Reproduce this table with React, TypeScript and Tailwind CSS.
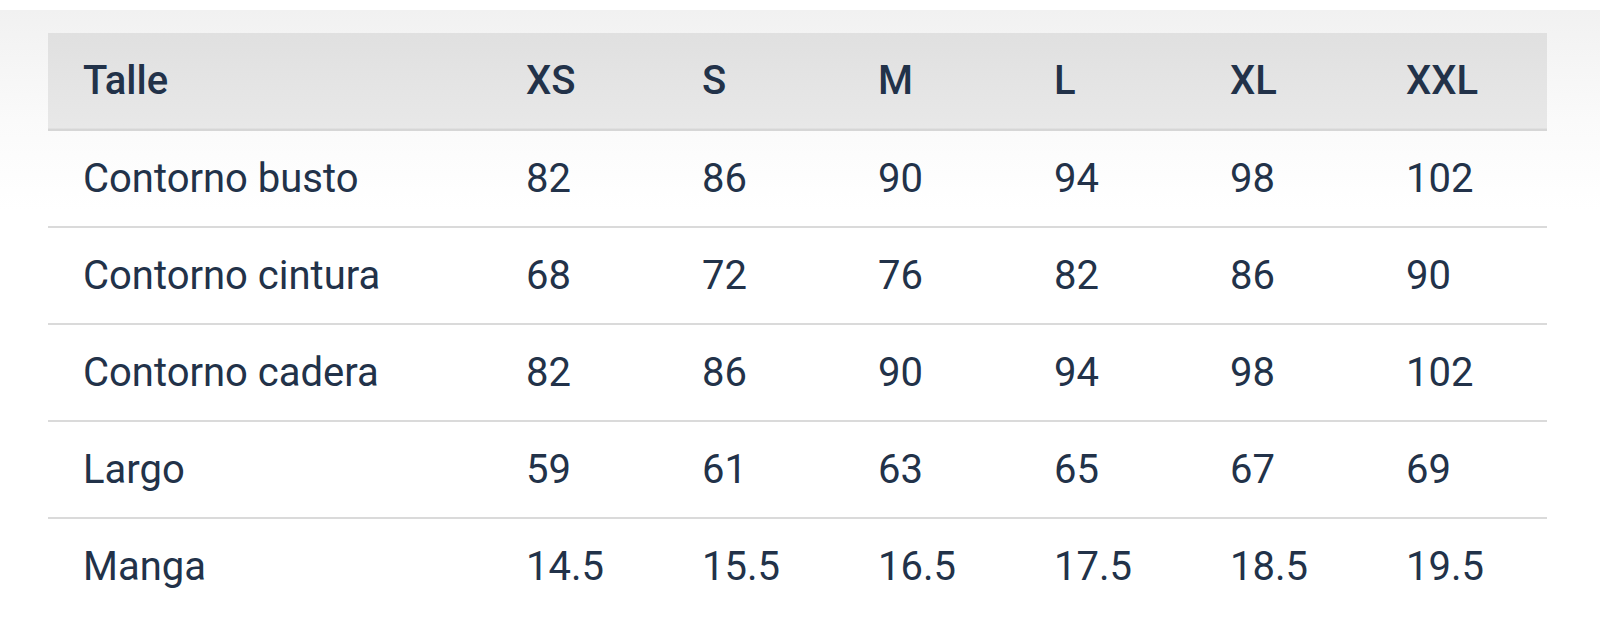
const sizes = ['XS', 'S', 'M', 'L', 'XL', 'XXL'];

const rows: { label: string; values: string[] }[] = [
  { label: 'Contorno busto', values: ['82', '86', '90', '94', '98', '102'] },
  { label: 'Contorno cintura', values: ['68', '72', '76', '82', '86', '90'] },
  { label: 'Contorno cadera', values: ['82', '86', '90', '94', '98', '102'] },
  { label: 'Largo', values: ['59', '61', '63', '65', '67', '69'] },
  { label: 'Manga', values: ['14.5', '15.5', '16.5', '17.5', '18.5', '19.5'] },
];

export default function App() {
  return (
    <div className="w-[1600px] h-[620px] bg-white pt-[10px] overflow-hidden" style={{ fontFamily: 'Roboto, "Noto Sans", sans-serif' }}>
      <div className="h-full bg-[linear-gradient(to_bottom,#f1f1f1,#fafafa_110px,#ffffff_200px)] pt-[23px] pl-[48px]">
        <table className="w-[1499px] table-fixed border-collapse text-[40px] text-[#223249]">
          <colgroup>
            <col className="w-[443px]" />
            {sizes.map((s) => (
              <col key={s} className="w-[176px]" />
            ))}
          </colgroup>
          <thead>
            <tr className="h-[97px] bg-gradient-to-b from-[#e0e0e0] to-[#e8e8e8] border-b-2 border-[#d6d6d6]">
              <th className="pl-[35px] text-left font-medium">Talle</th>
              {sizes.map((s) => (
                <th key={s} className="pl-[35px] text-left font-medium">{s}</th>
              ))}
            </tr>
          </thead>
          <tbody>
            {rows.map((r, i) => (
              <tr key={r.label} className={`h-[97px] ${i < rows.length - 1 ? 'border-b-2 border-[#dadada]' : ''}`}>
                <td className="pl-[35px] font-normal">{r.label}</td>
                {r.values.map((v, j) => (
                  <td key={j} className="pl-[35px] font-normal">{v}</td>
                ))}
              </tr>
            ))}
          </tbody>
        </table>
      </div>
    </div>
  );
}
